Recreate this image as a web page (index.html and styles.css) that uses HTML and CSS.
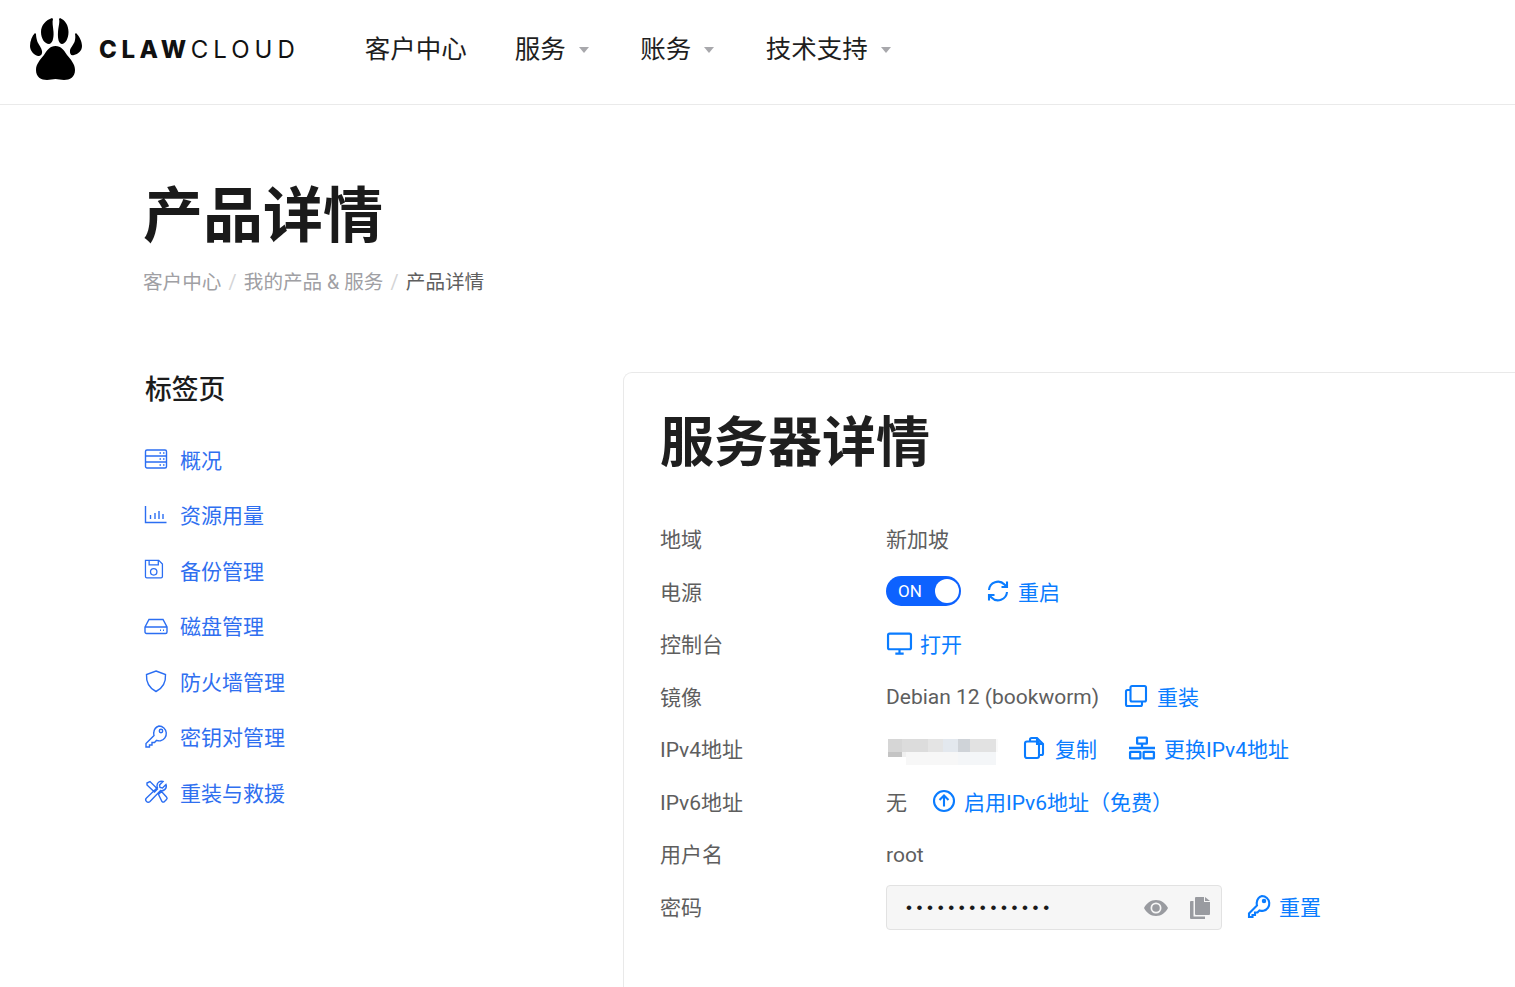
FILE: index.html
```html
<!DOCTYPE html>
<html lang="zh-CN">
<head>
<meta charset="utf-8">
<title>产品详情</title>
<link rel="stylesheet" href="styles.css">
</head>
<body>
<header class="topbar">
  <a class="logo">
    <svg class="paw" viewBox="0 0 52 64" width="52" height="64"><g fill="#000">
      <path d="M25.500 29C20 29 17 33 14 38C10 43 6 47 6 53C6 60 11 63 17 63C20 63 23 62 25.500 62C28 62 31 63 34 63C40 63 45 60 45 53C45 47 41 43 37 38C34 33 31 29 25.500 29Z"/>
      <path d="M22 1C16 3 11 8 11 15C11 22 15 27 19 27C22 27 24 22 23.500 15C23 9 22 5 23 2Z"/>
      <path d="M30 1C35 3 38.500 8 38.500 15C38.500 22 35 27 32 27C29 27 27.500 22 28 15C28.500 9 30 5 29 2Z"/>
      <path d="M5 16C2 19 0 24 0 29C0 34 4 38 8 39C11 39 12.500 37 12 34C11.500 31 9 28 7.500 25C6.500 22 6 19 6 17Z"/>
      <path d="M46 16C49 19 52 24 52 29C52 34 48 37 44 38C41 39 39.500 37 40 33C40.500 31 43 28 44.500 25C45.500 22 45.500 19 45 17Z"/>
    </g></svg>
    <span class="wordmark"><b>CLAW</b><span>CLOUD</span></span>
  </a>
  <nav class="mainnav">
    <a class="navitem">客户中心</a>
    <a class="navitem caret">服务</a>
    <a class="navitem caret">账务</a>
    <a class="navitem caret">技术支持</a>
  </nav>
</header>

<section class="pagehead">
  <h1>产品详情</h1>
  <ol class="crumbs">
    <li>客户中心</li><li class="sep">/</li>
    <li>我的产品 &amp; 服务</li><li class="sep">/</li>
    <li class="current">产品详情</li>
  </ol>
</section>

<main class="content">
  <aside class="side">
    <h2>标签页</h2>
    <ul class="tabs">
      <li><svg class="sicon" viewBox="1 1 22 22"><rect x="1.500" y="3" width="21" height="18" rx="1.500"/><path d="M1.500 9h21M1.500 15h21M15.500 6h1.500M19 6h1.500M15.500 12h1.500M19 12h1.500M15.500 18h1.500M19 18h1.500"/></svg>概况</li>
      <li><svg class="sicon" viewBox="1 1 22 22"><path d="M1.500 4v16.500h21M6.500 17v-4M11 17v-6M15 17v-8M19 17v-5"/></svg>资源用量</li>
      <li><svg class="sicon" viewBox="2.500 1 24 24"><path d="M3 2.500h14.500l4 4v13.500a1.500 1.500 0 0 1-1.500 1.500H4.500A1.500 1.500 0 0 1 3 20zM7 2.500v5h10v-5"/><circle cx="12" cy="15" r="3.500"/></svg>备份管理</li>
      <li><svg class="sicon" viewBox="1 1 22 22"><path d="M1 14l4-7.500h14l4 7.500v5a1.500 1.500 0 0 1-1.500 1.500h-19A1.500 1.500 0 0 1 1 19zM1 14h22M16 17.300h1M19 17.300h1"/></svg>磁盘管理</li>
      <li><svg class="sicon" viewBox="1 1 22 22"><path d="M12 2l9.500 3.500c.5 8-2.500 13.500-9.500 17-7-3.500-10-9-9.500-17z"/></svg>防火墙管理</li>
      <li><svg class="sicon" viewBox="1 1 22 22"><path d="M15 2a7.500 7.500 0 0 1 1.500 14.800c-1.500.3-3-.1-4-.4l-2 2.100H8v2.500H5.500v2H2v-3.500l8-8c-.3-1-.4-2-.2-3A7.500 7.500 0 0 1 15 2z"/><circle cx="17" cy="7" r="1.700"/></svg>密钥对管理</li>
      <li><svg class="sicon" viewBox="1 1 22 22"><path d="M3 3l3-1.500 7.500 7.500-3 3-7.500-7zM14.500 14.500l3-3 5 5.500c.7.700.7 1.800 0 2.500l-2 2c-.7.700-1.800.7-2.500 0zM22 4.500L18.500 8l-2.500-.5-.5-2.500L19 1.500c-3-1-6 1-6 4 0 1 .2 1.500.5 2L2.500 18c-1 1-1 2.500 0 3.500s2.500 1 3.500 0L16.500 10.500c3 1 7-2 5.500-6z"/></svg>重装与救援</li>
    </ul>
  </aside>

  <section class="card">
    <h2 class="cardtitle">服务器详情</h2>
    <dl class="info">
      <div class="row"><dt>地域</dt><dd>新加坡</dd></div>
      <div class="row"><dt>电源</dt><dd>
        <span class="switch"><span class="switchlabel">ON</span><i class="knob"></i></span>
        <a class="act gap-power"><svg class="aicon tight" viewBox="0 0 24 24"><path d="M3 11a9 9 0 0 1 15.500-5.500L21 8M21 2.500V8h-5.500M21 13a9 9 0 0 1-15.500 5.500L3 16M3 21.500V16h5.500"/></svg>重启</a>
      </dd></div>
      <div class="row"><dt>控制台</dt><dd>
        <a class="act gap-console"><svg class="aicon wide" viewBox="0 0 24 24"><rect x="1" y="2.500" width="22" height="15" rx="1.500"/><path d="M8 21.800h8M12 17.500v4"/></svg>打开</a>
      </dd></div>
      <div class="row"><dt>镜像</dt><dd>
        <span class="latin">Debian 12 (bookworm)</span>
        <a class="act gap-image"><svg class="aicon" viewBox="0 0 24 24"><rect x="6.500" y="2" width="15.500" height="15.500" rx="1.500"/><path d="M6.500 6H3.500A1.500 1.500 0 0 0 2 7.500v13A1.500 1.500 0 0 0 3.500 22h13a1.500 1.500 0 0 0 1.500-1.500v-3"/></svg>重装</a>
      </dd></div>
      <div class="row"><dt>IPv4地址</dt><dd>
        <span class="masked"></span>
        <a class="act gap-copy"><svg class="aicon" viewBox="0 0 24 24"><path d="M8 5.500V3.500A1.500 1.500 0 0 1 9.500 2H15l6 6v9.500a1.500 1.500 0 0 1-1.500 1.500H17M15 2v6h6"/><rect x="3" y="5.500" width="14" height="16.500" rx="2"/></svg>复制</a>
        <a class="act gap-change"><svg class="aicon net" viewBox="0 0 24 24"><rect x="7.500" y="2.500" width="9" height="5.500" rx=".5"/><rect x="1" y="15.500" width="9.500" height="6" rx=".5"/><rect x="13.500" y="15.500" width="9.500" height="6" rx=".5"/><path d="M12 8v4M0 12h24"/></svg>更换IPv4地址</a>
      </dd></div>
      <div class="row"><dt>IPv6地址</dt><dd>
        <span>无</span>
        <a class="act gap-none"><svg class="aicon tight" viewBox="0 0 24 24"><circle cx="12" cy="12" r="10"/><path d="M12 17.500v-11M7.500 11L12 6.500l4.500 4.500"/></svg>启用IPv6地址（免费）</a>
      </dd></div>
      <div class="row"><dt>用户名</dt><dd><span class="latin">root</span></dd></div>
      <div class="row"><dt>密码</dt><dd>
        <span class="pwdbox">
          <span class="dots">••••••••••••••</span>
          <svg class="eye" viewBox="0 0 24 16" width="24" height="16"><path fill="#999ba0" fill-rule="evenodd" d="M12 0C6.500 0 2.500 3.500 0 8c2.500 4.500 6.500 8 12 8s9.500-3.500 12-8c-2.500-4.500-6.500-8-12-8zm0 2.500A5.500 5.500 0 1 1 12 13.500 5.500 5.500 0 0 1 12 2.500z"/><circle fill="#999ba0" cx="12" cy="8" r="3.800"/></svg>
          <svg class="clip" viewBox="0 0 20 22" width="20" height="22"><path fill="#999ba0" d="M6 0h8v5h6v12a1 1 0 0 1-1 1H6a1 1 0 0 1-1-1V1a1 1 0 0 1 1-1zM15 0l5 4h-5zM3.500 4v15.500H15V22H1a1 1 0 0 1-1-1V5a1 1 0 0 1 1-1z"/></svg>
        </span>
        <a class="act gap-reset"><svg class="aicon tight" viewBox="0 0 24 24"><path d="M15 2a7.500 7.500 0 0 1 1.500 14.800c-1.500.3-3-.1-4-.4l-2 2.100H8v2.500H5.500v2H2v-3.500l8-8c-.3-1-.4-2-.2-3A7.500 7.500 0 0 1 15 2z"/><circle cx="17" cy="7" r="1.200"/></svg>重置</a>
      </dd></div>
    </dl>
  </section>
</main>
</body>
</html>
```

FILE: styles.css
```css
html, body { margin: 0; padding: 0; height: 987px; overflow: hidden; background: #fff; }
body { font-family: Roboto, "Noto Sans CJK SC", sans-serif; font-size: 21px; color: #5e5e5e; }
ul, ol, dl, dd, h1, h2 { margin: 0; padding: 0; list-style: none; }

.topbar { display: flex; align-items: center; height: 104px; border-bottom: 1px solid #eaeaea; padding-left: 30px; }
.logo { display: flex; align-items: center; margin-top: -7px; }
.paw { display: block; margin-right: 17px; }
.wordmark { font-family: Inter, sans-serif; font-size: 24px; color: #111; letter-spacing: 5px; white-space: nowrap; margin-top: 2px; }
.wordmark b { font-weight: 800; letter-spacing: 4.6px; }
.mainnav { display: flex; margin-left: 65px; margin-top: -7px; }
.navitem { font-size: 25.5px; color: #1e1e1e; margin-right: 48px; line-height: 36px; display: flex; align-items: center; }
.caret { margin-right: 63.5px; }
.caret::after { content: ""; width: 0; height: 0; border-left: 5.5px solid transparent; border-right: 5.5px solid transparent; border-top: 6px solid #a8a8ac; margin-left: 13px; margin-right: -12px; margin-top: 2px; }

.pagehead { padding: 72px 0 0 143px; }
.pagehead h1 { font-size: 60px; line-height: 80px; font-weight: 700; color: #1a1a1a; }
.crumbs { display: flex; font-size: 19.6px; line-height: 28px; color: #a0a0a4; margin-top: 12px; }
.crumbs .sep { color: #d4d4d6; margin: 0 7.2px; }
.crumbs .current { color: #5e5e5e; }

.content { display: flex; margin-top: 75px; padding-left: 145px; height: 616px; }
.side { width: 478px; flex: none; }
.side h2 { font-size: 26.8px; font-weight: 500; color: #1c1c1c; line-height: 36px; }
.tabs { margin-top: 23px; }
.tabs li { display: flex; align-items: center; height: 55.5px; color: #2f6ff0; }
.sicon { width: 22px; height: 22px; margin-right: 13px; fill: none; stroke: #2b6ef2; stroke-width: 1.4; flex: none; overflow: visible; }

.card { flex: 1; min-width: 0; box-sizing: border-box; height: 616px; border: 1px solid #e9e9e9; border-width: 1px 0 0 1px; border-radius: 9px 0 0 0; padding: 39px 0 0 36px; }
.cardtitle { font-size: 54px; line-height: 64px; font-weight: 700; color: #1f1f1f; }
.info { margin-top: 36px; }
.row { display: flex; align-items: center; height: 52.5px; }
.row dt { width: 226px; flex: none; color: #5e5e5e; }
.row dd { display: flex; align-items: center; color: #5e5e5e; }
.latin { padding-top: 3px; }

.act { display: inline-flex; align-items: center; color: #0a7cff; white-space: nowrap; }
.aicon { width: 24px; height: 24px; margin-right: 9px; fill: none; stroke: #0a7cff; stroke-width: 2.1; flex: none; overflow: visible; }
.aicon.tight { margin-right: 8px; }
.aicon.wide { width: 25px; height: 25px; margin-right: 8px; }
.aicon.net { width: 26px; height: 26px; }
.gap-console { margin-left: 1px; }
.gap-power { margin-left: 25px; }
.gap-image { margin-left: 25px; }
.gap-copy { margin-left: 24px; }
.gap-change { margin-left: 32px; }
.gap-none { margin-left: 25px; }
.gap-reset { margin-left: 25px; }

.switch { display: inline-flex; align-items: center; justify-content: space-between; width: 75px; height: 30px; border-radius: 15px; background: #0d62ff; padding: 0 2px 0 12px; box-sizing: border-box; }
.switchlabel { color: #fff; font-size: 17px; font-weight: 400; }
.knob { width: 24px; height: 24px; border-radius: 50%; background: #fff; }

.masked { width: 110px; height: 26px; margin: 8px 0 0 2px; background:
  linear-gradient(90deg, #d6d6d6 0 14px, #dcdcdc 14px 40px, #e4e4e4 40px 55px, #e3e8ee 55px 70px, #cfd3d8 70px 82px, #e2e2e2 82px 108px, #fafafa 108px) 0 0 / 100% 13px no-repeat,
  linear-gradient(90deg, #c4c4c4 0 14px, #f0f0f0 14px 18px, #f7f7f7 18px 70px, #f4f6f8 70px 108px, #fff 108px) 0 13px / 100% 5px no-repeat,
  linear-gradient(90deg, #fff 0 18px, #f7f7f7 18px 70px, #f4f6f8 70px 108px, #fff 108px) 0 18px / 100% 8px no-repeat; }

.pwdbox { display: flex; align-items: center; width: 336px; height: 45px; box-sizing: border-box; background: #f6f6f6; border: 1px solid #e2e2e2; border-radius: 4px; padding-left: 19px; margin-top: 4px; }
.dots { width: 238px; color: #1a1a1a; font-family: "Liberation Sans", sans-serif; font-size: 17px; letter-spacing: 4.6px; white-space: nowrap; overflow: hidden; }
.eye { margin-right: 22px; flex: none; }
.clip { flex: none; }
```
